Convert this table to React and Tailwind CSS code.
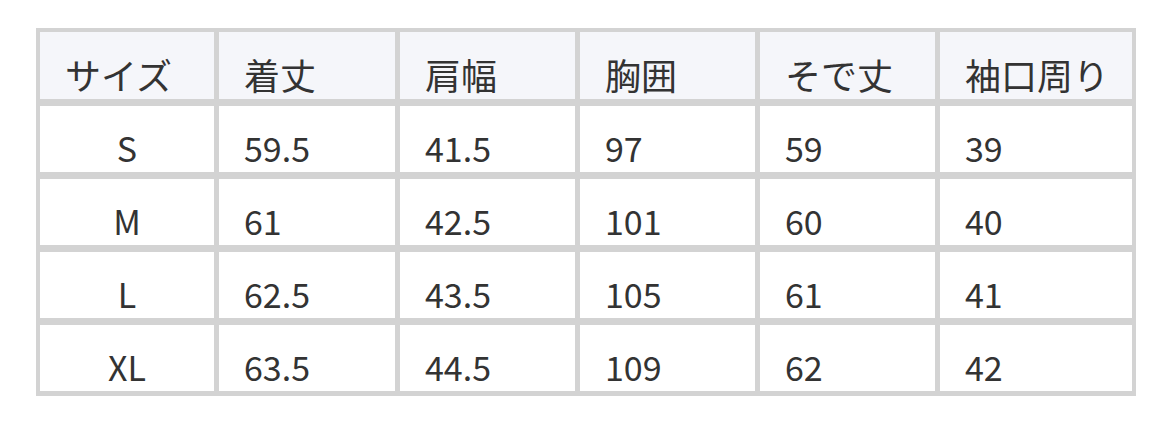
import React from 'react';

const headers = ['サイズ', '着丈', '肩幅', '胸囲', 'そで丈', '袖口周り']

const rows = [
    ['S', '59.5', '41.5', '97', '59', '39'],
    ['M', '61', '42.5', '101', '60', '40'],
    ['L', '62.5', '43.5', '105', '61', '41'],
    ['XL', '63.5', '44.5', '109', '62', '42'],
]

const SizeTable = () => {
    return (
        <div className="grid grid-cols-[174px_176px_175px_175px_175px_192px] gap-x-[5px] gap-y-[7px] bg-[#d3d3d3] pt-[4px] pl-[4px] pr-[4px] pb-[5px]">
            {headers.map((h) => (
                <div key={h} className="h-[67px] bg-[#f5f6fa] flex items-center pl-[25px] pt-[16px] text-[36px]">
                    {h}
                </div>
            ))}
            {rows.map((r) => r.map((c, i) => (
                <div
                    key={r[0] + i}
                    className={"h-[66px] bg-white flex items-center pt-[17px] text-[34px] " + (i === 0 ? "justify-center" : "pl-[25px]")}
                >
                    {c}
                </div>
            )))}
        </div>
    )
}

const App = () => {
    return (
        <div className="w-[1172px] h-[422px] bg-white pt-[28px] pl-[36px] text-[#333] leading-none font-['Noto_Sans_CJK_JP',sans-serif]">
            <div className="inline-block">
                <SizeTable />
            </div>
        </div>
    )
}

export default App
